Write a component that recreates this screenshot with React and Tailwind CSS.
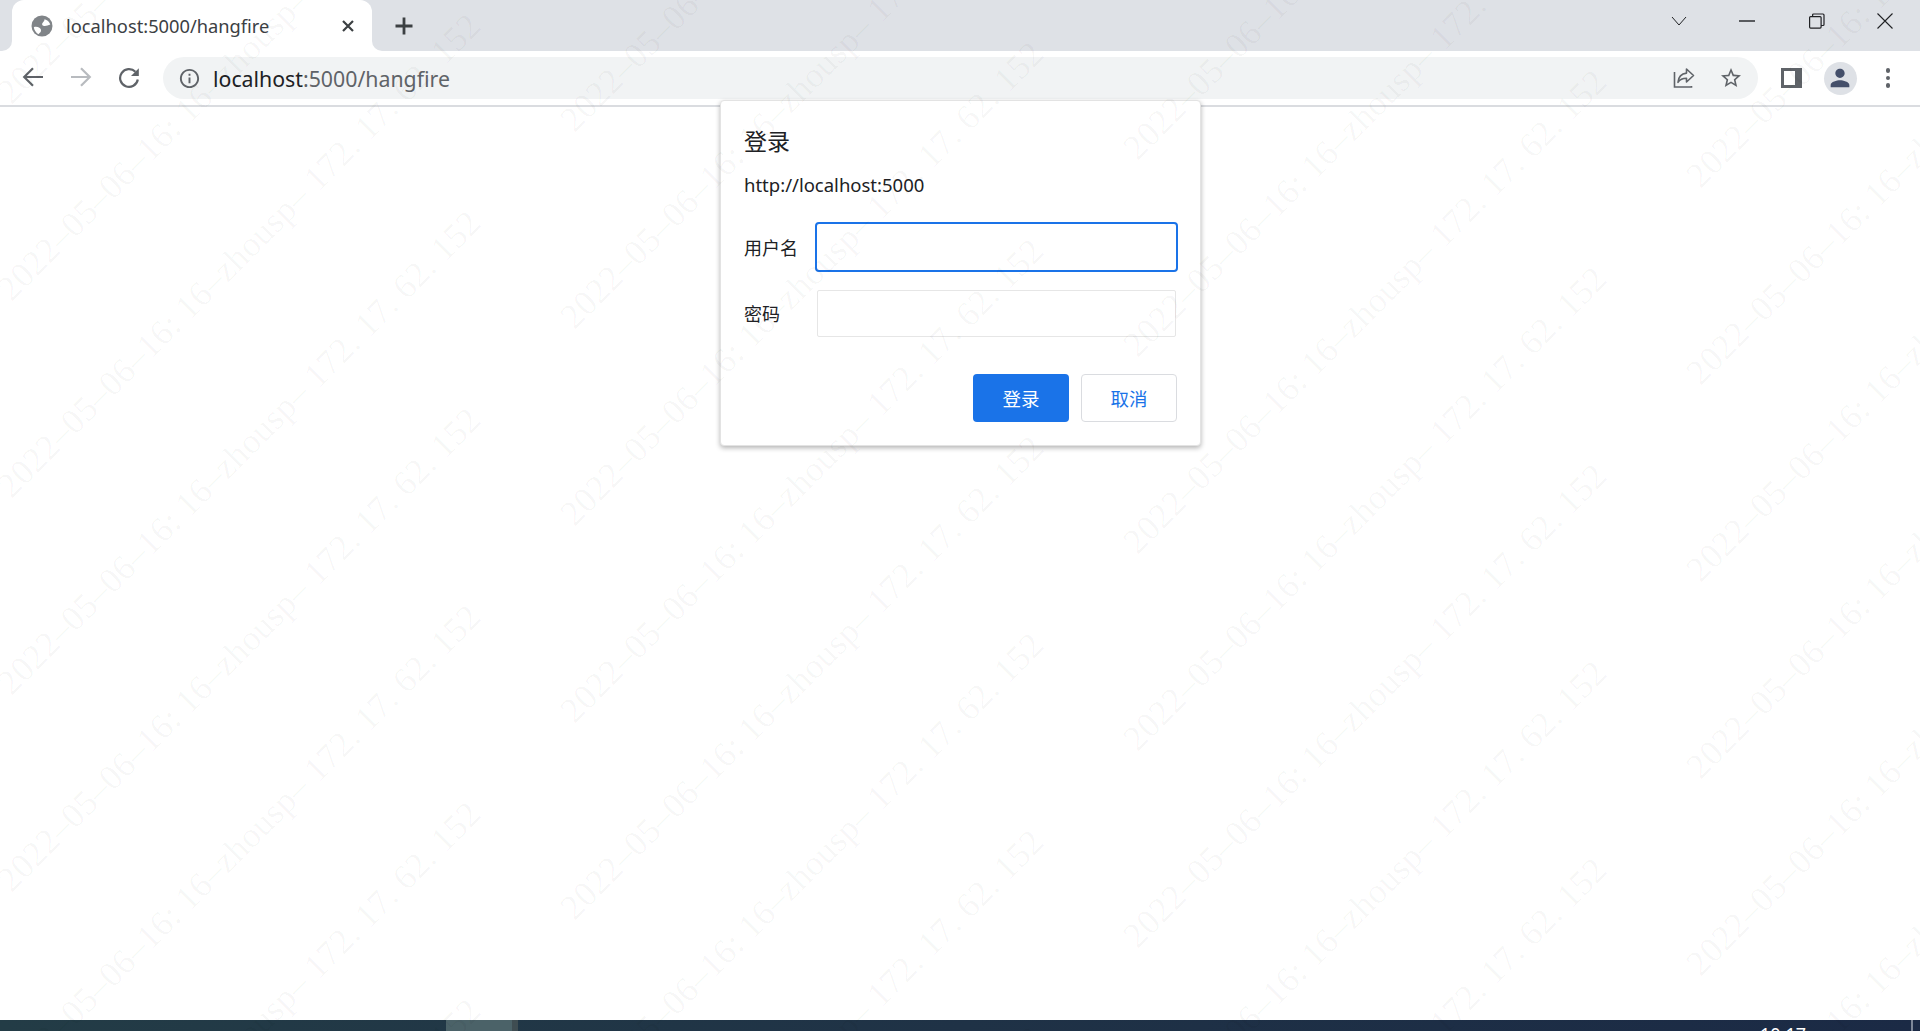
import React from "react";

const WM = "2022–05–06–16: 16–zhousp– 172. 17. 62. 152";
const cols = [0, 1, 2, 3];
const rows = [-4, -3, -2, -1, 0, 1, 2, 3, 4];

function Watermarks() {
  return (
    <div className="absolute inset-0 z-50 pointer-events-none overflow-hidden">
      {cols.flatMap((c) =>
        rows.map((r) => (
          <span
            key={c + "-" + r}
            className="absolute whitespace-pre text-[rgba(0,0,0,0.035)] text-[35.4px] leading-none tracking-[0.18px] [font-family:'Liberation_Serif',serif]"
            style={{
              left: 12 + c * 563,
              top: 667.4 + r * 197 + c * 28,
              transformOrigin: "0 29.6px",
              transform: "rotate(-45deg)",
            }}
          >
            {WM}
          </span>
        ))
      )}
    </div>
  );
}

function Icon({ d, size = 24, className = "" }) {
  return (
    <svg width={size} height={size} viewBox="0 0 24 24" className={className} fill="currentColor">
      <path d={d} />
    </svg>
  );
}

function Flare({ side }) {
  return (
    <span className={"absolute bottom-0 w-2.5 h-2.5 bg-white " + (side === "l" ? "-left-2.5" : "-right-2.5")}>
      <span className={"block w-full h-full bg-[#dee1e6] " + (side === "l" ? "rounded-br-[10px]" : "rounded-bl-[10px]")} />
    </span>
  );
}

export default function App() {
  return (
    <div className="relative flex flex-col w-full h-screen overflow-hidden bg-white [font-family:'Noto_Sans','Noto_Sans_CJK_SC',sans-serif]">
      {/* tab strip */}
      <div className="flex items-end h-[51px] shrink-0 bg-[#dee1e6] pl-3">
        <div className="relative flex items-center w-[360px] h-[51px] pl-[18px] pr-[16px] bg-white rounded-t-[12px]">
          <Flare side="l" />
          <Flare side="r" />
          <svg width="24" height="24" viewBox="0 0 24 24" className="shrink-0">
            <circle cx="12" cy="12" r="10.5" fill="#808488" />
            <path fill="#fff" d="M14.5 5.2c2.6.5 5 2.6 5.8 5.3-2.4.9-4.6 1.9-7 1.3-1.6-.5-1.4-2.5-.4-3.4.8-.8 1.7-1.9 1.6-3.2zM3.8 13.2c1.8-.6 4-.4 5.6.6 1.3.9 1.9 2.1 1.5 3.4-.4 1.3-1.6 2-2.5 3-2.4-1.5-4.1-4-4.6-7z" />
          </svg>
          <span className="ml-[12px] flex-1 text-[18.3px] text-[#3c4043] whitespace-nowrap">localhost:5000/hangfire</span>
          <svg width="16" height="16" viewBox="0 0 16 16" stroke="#3c4043" strokeWidth="2.2" fill="none">
            <path d="M3 3l10 10M13 3L3 13" />
          </svg>
        </div>
        <div className="flex items-center h-[51px] ml-[20px]">
          <svg width="24" height="24" viewBox="0 0 24 24" stroke="#3c4043" strokeWidth="2.8" fill="none">
            <path d="M12 3.5v17M3.5 12h17" />
          </svg>
        </div>
        <div className="flex items-center h-[51px] ml-auto pb-[9px]">
          <svg className="mr-[52px]" width="16" height="10" viewBox="0 0 16 10" stroke="#202124" strokeWidth="1" fill="none">
            <path d="M1 1l7 8 7-8" />
          </svg>
          <svg className="mr-[54px]" width="16" height="2" viewBox="0 0 16 2" stroke="#202124" strokeWidth="1.4" fill="none">
            <path d="M0 1h16" />
          </svg>
          <svg className="mr-[52px]" width="16" height="16" viewBox="0 0 16 16" stroke="#202124" strokeWidth="1.2" fill="none">
            <rect x="0.6" y="3.6" width="11.5" height="11.5" rx="1" />
            <path d="M3.6 3.6V2a1 1 0 0 1 1-1H14a1 1 0 0 1 1 1v9.5a1 1 0 0 1-1 1h-1.9" />
          </svg>
          <svg className="mr-[27px]" width="16" height="16" viewBox="0 0 16 16" stroke="#202124" strokeWidth="1.1" fill="none">
            <path d="M0.5 0.5l15 15M15.5 0.5l-15 15" />
          </svg>
        </div>
      </div>

      {/* toolbar */}
      <div className="flex items-center h-[56px] shrink-0 border-b-2 border-[#dadce0] bg-white">
        <svg className="ml-[21px] -mt-[2px] text-[#5f6368]" width="24" height="24" viewBox="0 0 24 24" fill="none" stroke="currentColor" strokeWidth="2.2">
          <path d="M22 12H3.5M12 3.2L3.2 12l8.8 8.8" />
        </svg>
        <svg className="ml-[24px] -mt-[2px] text-[#b8bbbf]" width="24" height="24" viewBox="0 0 24 24" fill="none" stroke="currentColor" strokeWidth="2.2">
          <path d="M2 12h18.5M12 3.2l8.8 8.8-8.8 8.8" />
        </svg>
        <svg className="ml-[24px] -mt-[2px] text-[#5f6368]" width="24" height="24" viewBox="0 0 24 24" fill="none">
          <path stroke="currentColor" strokeWidth="2.2" d="M20.8 14.5A8.9 8.9 0 1 1 18.4 6.8" />
          <path fill="currentColor" d="M21.8 3.2v7.8H14z" />
        </svg>
        <div className="flex items-center flex-1 h-[42px] ml-[22px] pl-[15px] pr-[15px] rounded-full bg-[#f1f3f4]">
          <Icon size={23} className="text-[#5f6368]" d="M11 7h2v2h-2zm0 4h2v6h-2zm1-9C6.48 2 2 6.48 2 12s4.48 10 10 10 10-4.48 10-10S17.52 2 12 2zm0 18c-4.41 0-8-3.59-8-8s3.59-8 8-8 8 3.59 8 8-3.59 8-8 8z" />
          <span className="ml-[12px] mt-[1px] flex-1 text-[21.3px] text-[#5f6368] whitespace-nowrap">
            <span className="text-[#202124]">localhost</span>:5000/hangfire
          </span>
          <svg className="mr-[23px] text-[#5f6368]" width="24" height="24" viewBox="0 0 24 24" fill="none" stroke="currentColor" strokeWidth="1.6">
            <path d="M2.5 6v15h17v-1" />
            <path d="M14.5 3l7 6.5-7 6.5v-3.7c-4 0-6.5 1-8.5 4 .4-5 3-8.6 8.5-9.2z" strokeLinejoin="round" />
          </svg>
          <Icon className="text-[#5f6368]" d="M22 9.24l-7.19-.62L12 2 9.19 8.63 2 9.24l5.46 4.73L5.82 21 12 17.27 18.18 21l-1.63-7.03L22 9.24zM12 15.4l-3.76 2.27 1-4.28-3.32-2.88 4.38-.38L12 6.1l1.71 4.04 4.38.38-3.32 2.88 1 4.28L12 15.4z" />
        </div>
        <svg className="ml-[23px]" width="22" height="22" viewBox="0 0 22 22" fill="#5f6368">
          <path d="M0 1h21v20H0zM3 4v14h11V4z" fillRule="evenodd" />
        </svg>
        <div className="flex items-center justify-center w-[33px] h-[33px] ml-[21px] rounded-full bg-[#dee1e6]">
          <Icon className="text-[#444f6a]" size={28} d="M12 12c2.21 0 4-1.79 4-4s-1.79-4-4-4-4 1.79-4 4 1.79 4 4 4zm0 2c-2.67 0-8 1.34-8 4v2h16v-2c0-2.66-5.33-4-8-4z" />
        </div>
        <div className="flex flex-col items-center gap-[3px] ml-[29px] mr-[30px]">
          <span className="w-[4.5px] h-[4.5px] rounded-full bg-[#5f6368]" />
          <span className="w-[4.5px] h-[4.5px] rounded-full bg-[#5f6368]" />
          <span className="w-[4.5px] h-[4.5px] rounded-full bg-[#5f6368]" />
        </div>
      </div>

      {/* page */}
      <div className="relative flex-1 bg-white">
        <div className="absolute left-[720px] -top-[7px] flex flex-col w-[481px] h-[346px] pl-[23px] pr-[24px] pt-[25px] rounded-[4px] bg-white border border-[#e3e3e3] shadow-[0_2px_5px_rgba(0,0,0,0.3)]">
          <div className="text-[23px] leading-[30px] text-[#202124]">登录</div>
          <div className="mt-[16px] text-[18.5px] leading-[26px] text-[#202124]">http://localhost:5000</div>
          <div className="flex items-center mt-[24px]">
            <label className="w-[71px] shrink-0 pt-[2px] text-[18px] text-[#202124]">用户名</label>
            <input className="w-[363px] shrink-0 h-[50px] rounded-[4px] border-[2.5px] border-[#1a73e8] outline-none" />
          </div>
          <div className="flex items-center mt-[18px]">
            <label className="w-[73px] shrink-0 pt-[2px] text-[18px] text-[#202124]">密码</label>
            <input className="w-[359px] shrink-0 h-[47px] rounded-[2px] border border-[#e6e6e6] outline-none" />
          </div>
          <div className="flex justify-end gap-[12px] mt-[37px] -mr-px">
            <button className="w-[96px] h-[48px] pt-[2px] rounded-[4px] bg-[#1a73e8] text-white text-[18.5px]">登录</button>
            <button className="w-[96px] h-[48px] pt-[2px] rounded-[4px] border border-[#dadce0] text-[#1a73e8] text-[18.5px]">取消</button>
          </div>
        </div>
      </div>

      {/* taskbar */}
      <div className="relative flex items-start h-[11px] shrink-0 overflow-hidden bg-gradient-to-r from-[#233c46] via-[#1f3246] to-[#1b2a45]">
        <div className="ml-[446px] w-[66px] h-full bg-[#4b6268]" />
        <div className="w-[6px] h-full bg-[#3f4d52]" />
        <span className="ml-auto mr-[114px] mt-[5px] text-[18px] leading-[18px] text-white">10:17</span>
        <div className="absolute right-[7px] top-0 w-[2px] h-full bg-[#7d8798]" />
      </div>

      <Watermarks />
    </div>
  );
}
